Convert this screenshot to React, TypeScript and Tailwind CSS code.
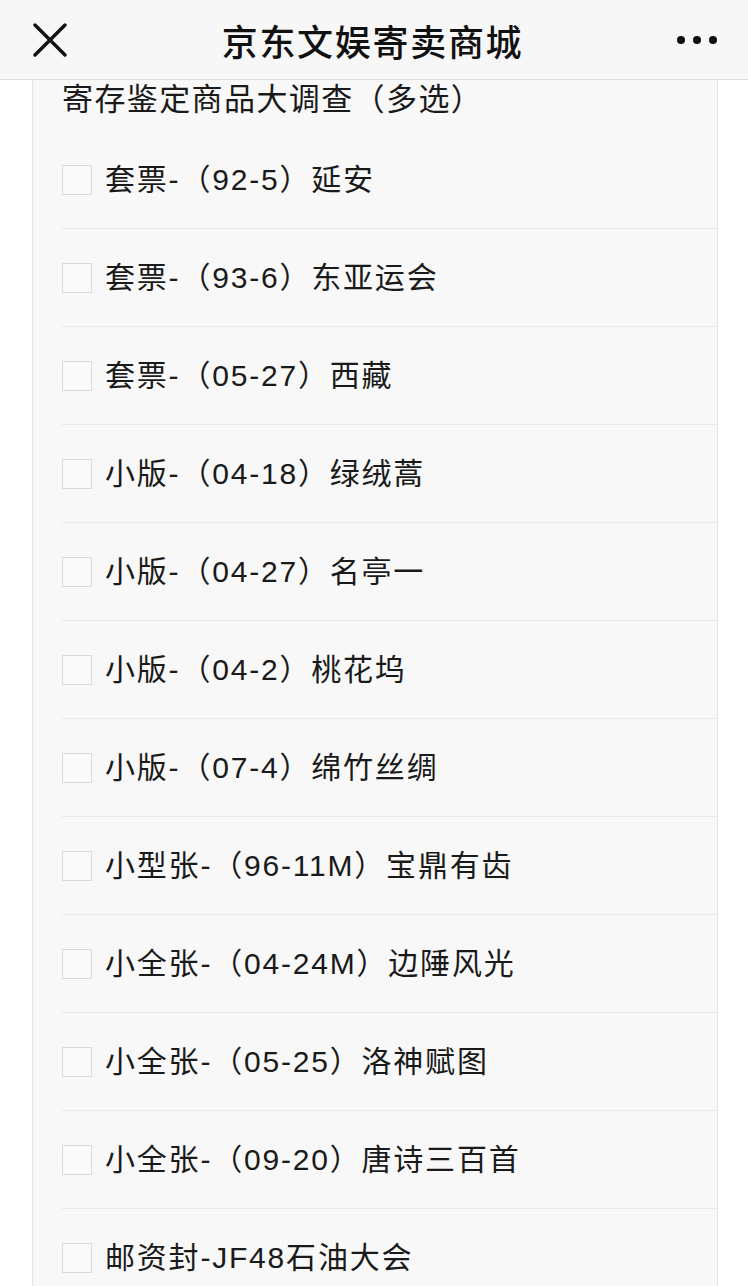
import React from "react";

const items = [
  "套票-（92-5）延安",
  "套票-（93-6）东亚运会",
  "套票-（05-27）西藏",
  "小版-（04-18）绿绒蒿",
  "小版-（04-27）名亭一",
  "小版-（04-2）桃花坞",
  "小版-（07-4）绵竹丝绸",
  "小型张-（96-11M）宝鼎有齿",
  "小全张-（04-24M）边陲风光",
  "小全张-（05-25）洛神赋图",
  "小全张-（09-20）唐诗三百首",
  "邮资封-JF48石油大会",
];

export default function App() {
  return (
    <div
      className="w-[748px] h-[1286px] overflow-hidden bg-white text-[#111]"
      style={{ fontFamily: '"Liberation Sans", "Noto Sans CJK SC", sans-serif' }}
    >
      <header className="h-[80px] bg-[#f7f7f7] border-b border-[#dcdcdc] flex items-center justify-between px-[34px]">
        <svg width="34" height="34" viewBox="0 0 34 34" className="-ml-[1px]">
          <path d="M2 2 L32 32 M32 2 L2 32" stroke="#111" strokeWidth="3.4" strokeLinecap="round" />
        </svg>
        <div
          className="text-[36px] font-medium leading-none tracking-[1.7px] ml-[2px]"
          style={{ fontFamily: '"Noto Sans CJK SC", sans-serif' }}
        >
          京东文娱寄卖商城
        </div>
        <svg width="42" height="10" viewBox="0 0 42 10" className="-mr-[4px]">
          <circle cx="5" cy="5" r="4" fill="#111" />
          <circle cx="21" cy="5" r="4" fill="#111" />
          <circle cx="37" cy="5" r="4" fill="#111" />
        </svg>
      </header>
      <main className="ml-[32px] w-[686px] h-[1206px] bg-[#f8f8f8] border-x border-[#e6e6e6]">
        <div
          className="h-[51px] pl-[29px] pt-[1px] text-[31px] leading-[32px] tracking-[1.4px] text-[#1a1a1a]"
          style={{ fontFamily: '"Noto Sans CJK SC", sans-serif' }}
        >
          寄存鉴定商品大调查（多选）
        </div>
        <div className="pl-[29px]">
          {items.map((t) => (
            <div key={t} className="h-[98px] border-b border-[#e8e8e8] flex items-center">
              <div className="w-[30px] h-[30px] border border-[#dadada] bg-[#fafafa] shrink-0" />
              <span className="ml-[13px] text-[30px] leading-none tracking-[1.8px] text-[#1a1a1a] whitespace-nowrap">
                {t}
              </span>
            </div>
          ))}
        </div>
      </main>
    </div>
  );
}
